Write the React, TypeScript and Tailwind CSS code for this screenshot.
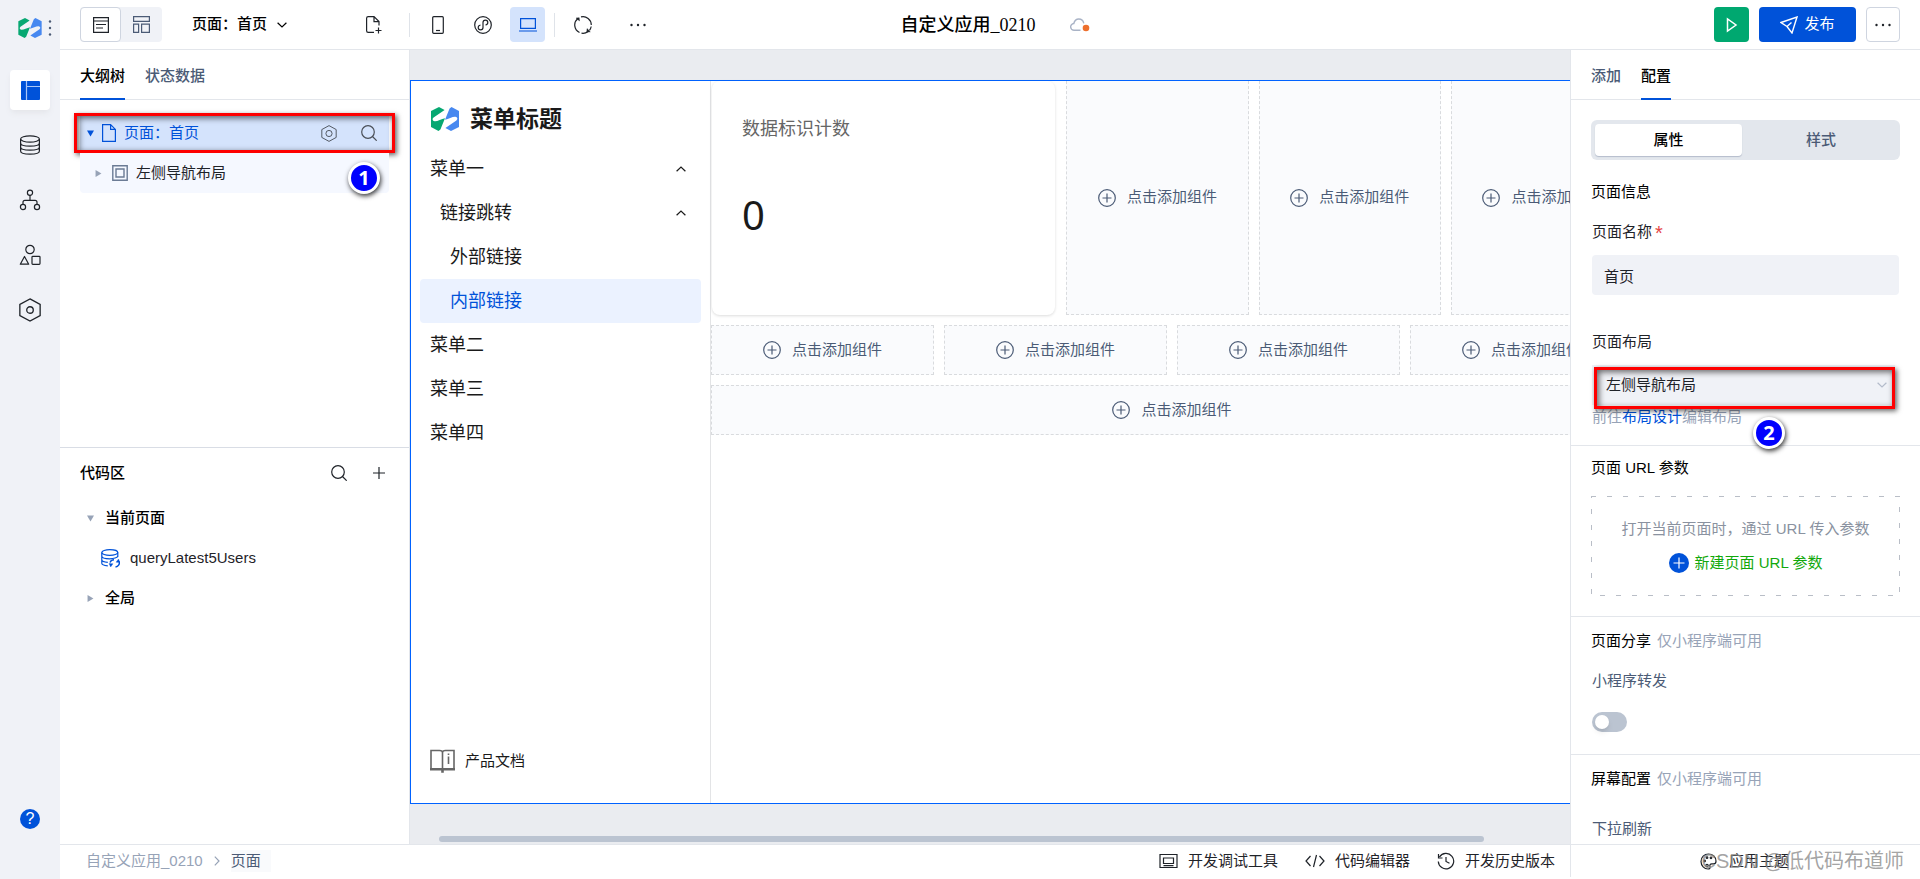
import React from 'react';
import type { ReactNode } from 'react';
import clsx from 'clsx';

type IconProps = { className?: string };

const Svg = ({ box, className, children }: { box: string; className?: string; children: ReactNode }) => (
  <svg
    viewBox={box}
    className={clsx('shrink-0', className)}
    fill="none"
    stroke="currentColor"
    strokeWidth="1.2"
    aria-hidden="true"
  >
    {children}
  </svg>
);

const logoHalf = 'M0 4 8 0l5.6 3.1L2.6 10.6C.9 11.9 1.6 14 3.6 14.2c2.6.3 6.8-2.2 10.4-3L9.4 22.6 7.5 24 0 20Z';

const Logo = ({ className }: IconProps) => (
  <svg viewBox="0 0 28 24" className={clsx('shrink-0', className)} aria-hidden="true">
    <path fill="#07a872" d={logoHalf} />
    <path fill="#4788f0" transform="rotate(180 14 12)" d={logoHalf} />
  </svg>
);

const SearchIcon = ({ className }: IconProps) => (
  <Svg box="0 0 16 16" className={className}>
    <circle cx="7" cy="7" r="6.3" />
    <path d="m11.5 11.5 4.2 4.2" />
  </Svg>
);

const HexIcon = ({ className, r = 3 }: IconProps & { r?: number }) => (
  <Svg box="0 0 20 22" className={className}>
    <path d="m10 .8 9.3 5.1v10.2L10 21.2.7 16.1V5.9Z" />
    <circle cx="10" cy="11" r={r} />
  </Svg>
);

const PlusCircle = ({ className }: IconProps) => (
  <Svg box="0 0 18 18" className={className}>
    <circle cx="9" cy="9" r="8.3" />
    <path d="M9 4.5v9M4.5 9h9" />
  </Svg>
);

const Dots = ({ className }: IconProps) => (
  <svg viewBox="0 0 16 4" className={clsx('w-4 h-1 shrink-0', className)} fill="currentColor" aria-hidden="true">
    <circle cx="1.5" cy="2" r="1.2" />
    <circle cx="8" cy="2" r="1.2" />
    <circle cx="14.5" cy="2" r="1.2" />
  </svg>
);

const Chevron = ({ className }: IconProps) => (
  <Svg box="0 0 10 6" className={className}>
    <path d="m.6.8 4.4 4.2L9.4.8" />
  </Svg>
);

const Caret = ({ open, className }: IconProps & { open?: boolean }) => (
  <svg viewBox="0 0 6 6" className={clsx('w-[7px] h-[7px] shrink-0', className)} fill="currentColor" aria-hidden="true">
    <path d={open ? 'M0 .5h6L3 5.500Z' : 'M.5 0v6l5-3Z'} />
  </svg>
);

const railItems = [
  {
    name: '数据源',
    icon: (
      <Svg box="0 0 22 22" className="w-[22px] h-[22px]">
        <ellipse cx="11" cy="5" rx="9.4" ry="3.2" />
        <path d="M1.600 5v12c0 2 4.200 3.200 9.400 3.200s9.400-1.200 9.400-3.200V5M1.600 9c0 2 4.200 3.200 9.400 3.200s9.400-1.200 9.400-3.200M1.600 13c0 2 4.200 3.200 9.400 3.200s9.400-1.200 9.400-3.200" />
      </Svg>
    ),
  },
  {
    name: '流程',
    icon: (
      <Svg box="0 0 22 22" className="w-[22px] h-[22px]">
        <circle cx="11" cy="3.7" r="2.6" />
        <circle cx="4" cy="18" r="2.6" />
        <circle cx="18" cy="18" r="2.6" />
        <path d="M11 6.300v5M4 15.400v-2.200c0-1.200.8-1.900 1.900-1.900h10.200c1.100 0 1.900.7 1.900 1.900v2.200" />
      </Svg>
    ),
  },
  {
    name: '组件',
    icon: (
      <Svg box="0 0 22 22" className="w-[22px] h-[22px]">
        <circle cx="11" cy="5.500" r="4.200" />
        <path d="m5.500 12.500 4.200 7.700H1.300Z" strokeLinejoin="round" />
        <rect x="13" y="12.300" width="8" height="8" rx=".8" />
      </Svg>
    ),
  },
  { name: '设置', icon: <HexIcon className="w-[22px] h-6" /> },
];

const Rail = () => (
  <nav className="flex flex-col items-center w-[60px] shrink-0 bg-[#f0f2f7] text-[#1f2329]">
    <div className="flex items-center w-full h-[55px] pl-[18px]">
      <Logo className="w-6 h-5" />
      <Dots className="rotate-90 text-[#4b5b76]" />
    </div>
    <div className="flex flex-col gap-[15px] pt-[15px]">
      <button type="button" aria-label="页面" className="flex items-center justify-center w-10 h-10 bg-white rounded shadow-md shadow-gray-200">
        <svg viewBox="0 0 19 19" className="w-[19px] h-[19px]" aria-hidden="true">
          <rect width="19" height="19" rx="1" fill="#0052d9" />
          <path d="M5.500 0v19M5.500 5.500H19" stroke="#a9c6f7" strokeWidth="1.2" />
        </svg>
      </button>
      {railItems.map((item) => (
        <button key={item.name} type="button" aria-label={item.name} className="flex items-center justify-center w-10 h-10">
          {item.icon}
        </button>
      ))}
    </div>
    <button
      type="button"
      aria-label="帮助"
      className="flex items-center justify-center w-5 h-5 mt-auto mb-[50px] rounded-full bg-[#0052d9] text-white text-base leading-5"
    >
      ?
    </button>
  </nav>
);

const iconBtn = 'flex items-center justify-center w-[35px] h-[35px] rounded-sm shrink-0';

const Header = () => (
  <header className="flex items-center h-[50px] shrink-0 px-5 border-b border-[#e3e6eb] text-[#1f2329]">
    <div className="flex items-center flex-1">
      <div className="flex rounded bg-[#f0f2f7]">
        <button type="button" aria-label="列表视图" className="flex items-center justify-center w-[41px] h-[35px] bg-white border border-[#cfd5e0] rounded">
          <Svg box="0 0 16 16" className="w-4 h-4">
            <path d="M.6.6h14.800v14.800H.6ZM.6 4h14.800M3 7.500h10M3 11h7" />
          </Svg>
        </button>
        <button type="button" aria-label="布局视图" className="flex items-center justify-center w-[41px] h-[35px] text-[#4b5b76]">
          <Svg box="0 0 17 17" className="w-[17px] h-[17px]">
            <path d="M.6.6h15.800v4.800H.6ZM.6 8.100h5v8.300h-5ZM8.600 8.100h7.800v8.300H8.600Z" />
          </Svg>
        </button>
      </div>
      <button type="button" className="flex items-center gap-2.5 ml-[30px] text-[15px] font-medium text-black">
        页面：首页
        <Chevron className="w-2.5 h-1.5" />
      </button>
      <button type="button" aria-label="新建页面" className={clsx(iconBtn, 'ml-[69px]')}>
        <Svg box="0 0 16 18" className="w-4 h-[18px]">
          <path d="M8 16.400H2.200c-.9 0-1.600-.7-1.600-1.600V2.200C.6 1.300 1.300.6 2.200.6H8l5 5v4M8 .6v5h5M12.500 11.500v6M9.500 14.500h6" />
        </Svg>
      </button>
      <span className="w-px h-6 ml-[18px] mr-2.5 bg-[#dfe3e9]" />
      <div className="flex gap-2.5">
        <button type="button" aria-label="手机" className={iconBtn}>
          <Svg box="0 0 12 18" className="w-3 h-[18px]">
            <rect x=".7" y=".7" width="10.600" height="16.600" rx="1" />
            <path d="M4 14.500h4" />
          </Svg>
        </button>
        <button type="button" aria-label="小程序" className={iconBtn}>
          <Svg box="0 0 18 18" className="w-[18px] h-[18px]">
            <circle cx="9" cy="9" r="8.300" />
            <path d="M6.500 9C5 9.300 4.200 10.300 4.200 11.600c0 1.400 1 2.300 2.400 2.300S9 13 9 11.600V6.400C9 5 10 4.100 11.400 4.100s2.400.9 2.400 2.300c0 1.300-.8 2.300-2.300 2.600" />
          </Svg>
        </button>
        <button type="button" aria-label="电脑" className={clsx(iconBtn, 'bg-[#d4e3fc] text-[#0052d9]')}>
          <Svg box="0 0 18 15" className="w-[18px] h-[15px]">
            <path d="M1.600 1.600h14.800v9.800H1.600ZM0 14h18" />
          </Svg>
        </button>
      </div>
      <span className="w-px h-6 ml-[9px] mr-2.5 bg-[#dfe3e9]" />
      <button type="button" aria-label="刷新" className={iconBtn}>
        <Svg box="0 0 18 18" className="w-[18px] h-[18px]">
          <path d="M4 2.400A8.300 8.300 0 0 0 5.500 16.500M7 .9A8.300 8.300 0 0 1 17.300 9M14 15.600A8.300 8.300 0 0 1 7.500 17.200M17.200 10.500a8.300 8.300 0 0 1-1.700 3.800" />
          <path d="m2 2 3.200-.3.300 3.200ZM16.300 15.800l-3.500.4.200-3.600Z" fill="currentColor" strokeWidth=".4" />
        </Svg>
      </button>
      <button type="button" aria-label="更多工具" className={clsx(iconBtn, 'ml-5')}>
        <Dots />
      </button>
    </div>

    <div className="flex items-center gap-[34px] pl-2.5">
      <h1 className="font-['Liberation_Serif','Noto_Sans_CJK_SC',serif] text-lg font-medium text-black whitespace-nowrap">
        自定义应用_0210
      </h1>
      <svg viewBox="0 0 20 14" className="w-5 h-3.5" fill="none" aria-hidden="true">
        <path d="M10.500 12.300H4.300a3.400 3.400 0 0 1-.5-6.800C4.500 2.800 6.300 1 8.800 1c2.600 0 4.500 1.900 5 4.300" stroke="#a9b3c6" strokeWidth="1.400" />
        <circle cx="16" cy="10" r="3.300" fill="#ed6f2d" />
      </svg>
    </div>

    <div className="flex items-center justify-end flex-1 gap-2.5">
      <button type="button" aria-label="预览" className={clsx(iconBtn, 'bg-[#00a870] text-white')}>
        <Svg box="0 0 12 16" className="w-3 h-4">
          <path d="M1.500 2v12l8.500-6Z" strokeWidth="1.500" />
        </Svg>
      </button>
      <button type="button" className="flex items-center justify-center gap-1.5 w-[97px] h-[35px] rounded-sm bg-[#0052d9] text-white text-[15px]">
        <Svg box="0 0 18 18" className="w-[18px] h-[18px]">
          <path d="M1 6.500 17 1l-5 16-5-6.500ZM7 10.500l4.500-4" strokeWidth="1.400" />
        </Svg>
        发布
      </button>
      <button type="button" aria-label="更多" className="flex items-center justify-center w-[34px] h-[35px] border border-[#cfd5e0] rounded">
        <Dots />
      </button>
    </div>
  </header>
);

const Tabs = ({ items, active }: { items: string[]; active: string }) => (
  <div role="tablist" className="flex gap-5 h-[50px] px-5 shrink-0 border-b border-[#e3e6eb] text-[15px]">
    {items.map((item) => (
      <button
        key={item}
        type="button"
        role="tab"
        aria-selected={item === active}
        className={clsx(
          '-mb-px pt-1 border-b-2 font-medium',
          item === active ? 'border-[#0052d9] text-black' : 'border-transparent text-[#4b5b76]',
        )}
      >
        {item}
      </button>
    ))}
  </div>
);

/* Red frame and numbered pin used for the walkthrough steps */
const Highlight = ({ className }: IconProps) => (
  <span
    className={clsx(
      'absolute pointer-events-none border-3 border-[#fe0000] shadow-[2px_2px_5px_rgba(0,0,0,0.6),inset_2px_2px_6px_rgba(0,0,0,0.6)]',
      className,
    )}
  />
);

const Pin = ({ n, className }: { n: number; className?: string }) => (
  <span
    className={clsx(
      "absolute z-10 flex items-center justify-center w-8 h-8 rounded-full border-3 border-white bg-[#0000fe] text-white text-xl leading-none font-bold font-['Noto_Sans',sans-serif] shadow-[1px_2px_5px_rgba(0,0,0,0.8)]",
      className,
    )}
  >
    {n}
  </span>
);

const LeftPanel = () => (
  <aside className="flex flex-col w-[350px] shrink-0 border-r border-[#e3e6eb] text-[15px]">
    <section className="h-[397px] shrink-0">
      <Tabs items={['大纲树', '状态数据']} active="大纲树" />
      <div className="px-5 pt-[13px]">
        <div className="relative flex items-center h-10 pl-[7px] pr-3 bg-[#d4e3fc] text-[#0052d9]">
          <Caret open />
          <Svg box="0 0 14 18" className="w-3.5 h-[18px] mx-2">
            <path d="M.6.6h8l4.800 4.800v12H.6ZM8.600.6v4.800h4.800" />
          </Svg>
          <span>页面：首页</span>
          <button type="button" aria-label="页面设置" className="ml-auto text-[#4a4f57]">
            <HexIcon className="w-4 h-[17px]" r={4} />
          </button>
          <button type="button" aria-label="搜索节点" className="ml-6 text-[#4a4f57]">
            <SearchIcon className="w-4 h-4" />
          </button>
          <Highlight className="-inset-x-1.5 inset-y-0" />
        </div>
        <div className="relative flex items-center h-10 pl-[15px] bg-[#f5f8ff] rounded-b text-[#1f2329]">
          <Caret className="text-[#97a3b7]" />
          <Svg box="0 0 16 16" className="w-4 h-4 ml-2.5 mr-2 text-[#6b7b95]">
            <path d="M.8.8h14.400v14.400H.8ZM4 4h8v8H4Z" strokeWidth="1.400" />
          </Svg>
          <span>左侧导航布局</span>
          <Pin n={1} className="right-[9px] top-[9px]" />
        </div>
      </div>
    </section>

    <section className="flex-1 border-t border-[#d9dde5]">
      <div className="flex items-center h-[50px] pl-5 pr-6 text-[#1f2329]">
        <h2 className="font-medium text-black">代码区</h2>
        <button type="button" aria-label="搜索代码" className="ml-auto">
          <SearchIcon className="w-4 h-4" />
        </button>
        <button type="button" aria-label="添加代码" className="ml-[26px]">
          <Svg box="0 0 12 12" className="w-3 h-3">
            <path d="M6 0v12M0 6h12" />
          </Svg>
        </button>
      </div>
      <div className="flex items-center gap-[11px] h-10 pl-[27px]">
        <Caret open className="text-[#97a3b7]" />
        <span className="font-medium text-black">当前页面</span>
      </div>
      <div className="flex items-center gap-2.5 h-10 pl-[41px] text-[#1f2329]">
        <Svg box="0 0 19 19" className="w-[19px] h-[19px] text-[#0052d9]">
          <ellipse cx="8.800" cy="3.500" rx="8" ry="2.800" />
          <path d="M.8 3.500v10.800c0 1.400 2.600 2.300 6 2.600M16.800 3.500v4.500M.8 7c0 1.600 3.600 2.800 8 2.800 3.600 0 8-1.200 8-2.800M.8 10.700c0 1.500 2.600 2.400 6 2.700" />
          <path d="M9 13.500A4.500 4.500 0 0 1 13 10.800M18.300 12.500a4.500 4.500 0 0 1-3.800 5.500" strokeWidth="1.400" />
          <path d="m8 14.500 4 .2-2.300 3.300ZM19 13.500l-4-.3 2.500-3.200Z" fill="currentColor" strokeWidth=".3" />
        </Svg>
        <span>queryLatest5Users</span>
      </div>
      <div className="flex items-center gap-[11px] h-10 pl-[27px]">
        <Caret className="text-[#97a3b7]" />
        <span className="font-medium text-black">全局</span>
      </div>
    </section>
  </aside>
);

const menu = [
  { label: '菜单一', pad: 'pl-2.5', open: true },
  { label: '链接跳转', pad: 'pl-5', open: true },
  { label: '外部链接', pad: 'pl-[30px]' },
  { label: '内部链接', pad: 'pl-[30px]', active: true },
  { label: '菜单二', pad: 'pl-2.5' },
  { label: '菜单三', pad: 'pl-2.5' },
  { label: '菜单四', pad: 'pl-2.5' },
];

const Slot = ({ className }: IconProps) => (
  <button
    type="button"
    className={clsx(
      'flex items-center justify-center gap-[11px] min-w-0 border border-dashed border-[#d9dbde] bg-[#fafbfd] text-[15px] text-[#4b5b76]',
      className,
    )}
  >
    <PlusCircle className="w-[18px] h-[18px]" />
    点击添加组件
  </button>
);

const Canvas = () => (
  <main className="flex flex-col flex-1 min-w-0 overflow-hidden pt-[30px] bg-[#eaecf0]">
    <div className="flex flex-1 min-w-[1224px] border border-[#0062ff] bg-white">
      <div className="flex flex-col w-[300px] shrink-0 px-[9px] border-r border-[#e3e4e6] text-[#1a1a1a]">
        <div className="flex items-center gap-[11px] h-[66px] pl-[11px] pt-2.5">
          <Logo className="w-7 h-6" />
          <span className="text-[23px] font-bold">菜单标题</span>
        </div>
        <ul className="text-lg">
          {menu.map((item) => (
            <li key={item.label}>
              <a
                href="#"
                className={clsx(
                  'flex items-center justify-between h-11 pr-[15px] rounded-sm',
                  item.pad,
                  item.active && 'bg-[#ebf2ff] text-[#0052d9]',
                )}
              >
                {item.label}
                {item.open && <Chevron className="w-2.5 h-1.5 rotate-180" />}
              </a>
            </li>
          ))}
        </ul>
        <a href="#" className="flex items-center gap-2.5 mt-auto mb-[30px] pl-2.5 text-[15px]">
          <Svg box="0 0 25 24" className="w-[25px] h-6 text-[#666]">
            <path d="M1 19V1.500h8.500c1.800 0 3 .8 3 2V20M24 19V1.500h-8.500c-1.800 0-3 .8-3 2" strokeWidth="1.600" />
            <path d="M0 20.200h25M12.500 20v3.800" strokeWidth="2.600" />
            <path d="M18.500 7.500V15M18.500 4.500V6" strokeWidth="1.600" />
          </Svg>
          产品文档
        </a>
      </div>

      <div className="flex flex-col flex-1 gap-2.5 min-w-0">
        <div className="grid grid-cols-[345fr_182fr_182fr_182fr] gap-2.5 h-[234px]">
          <div className="px-[30px] pt-8 mx-px rounded-lg shadow-[0_1px_3px_rgba(0,0,0,0.14)]">
            <div className="text-lg leading-8 text-[#666]">数据标识计数</div>
            <div className="mt-10 font-['Noto_Sans',sans-serif] text-[40px] leading-[60px] text-[#1a1a1a]">0</div>
          </div>
          <Slot className="border-t-0" />
          <Slot className="border-t-0" />
          <Slot className="border-t-0" />
        </div>
        <div className="grid grid-cols-4 gap-2.5 h-[50px]">
          <Slot />
          <Slot />
          <Slot />
          <Slot />
        </div>
        <Slot className="h-[50px]" />
      </div>
    </div>
    <div className="h-10 pt-8 pl-[29px] pr-[86px] shrink-0">
      <div className="h-1.5 rounded-full bg-[#bbc4d1]" />
    </div>
  </main>
);

const RightPanel = () => (
  <aside className="flex flex-col w-[350px] shrink-0 overflow-hidden border-l border-[#e3e6eb] text-[15px] leading-6 text-[#1f2329]">
    <Tabs items={['添加', '配置']} active="配置" />

    <section className="px-5 pt-5 pb-4 border-b border-[#e3e6eb]">
      <div className="grid grid-cols-[147px_1fr] h-10 py-1 pl-1 rounded-md bg-[#e3e7ed] font-medium">
        <button type="button" className="rounded-sm bg-white text-black shadow-[0_1px_1px_#b4bccb]">属性</button>
        <button type="button" className="text-[#4b5b76]">样式</button>
      </div>
      <h3 className="mt-5 text-black">页面信息</h3>
      <div className="px-px">
        <label htmlFor="page-name" className="block mt-4">
          页面名称<span className="ml-[3px] text-xl leading-none align-middle text-[#e54545]">*</span>
        </label>
        <input id="page-name" defaultValue="首页" className="block w-full h-10 mt-[11px] px-3 rounded-sm bg-[#f0f2f7]" />
        <label htmlFor="page-layout" className="block mt-[35px]">页面布局</label>
        <div className="relative mt-[11px] mr-1">
          <select id="page-layout" className="block w-full h-10 pl-[14px] bg-[#f0f2f7] appearance-none">
            <option>左侧导航布局</option>
          </select>
          <Chevron className="absolute right-2 top-[17px] w-2.5 h-1.5 pointer-events-none text-[#b4bccb]" />
          <Highlight className="left-0.5 right-0 top-0.5 -bottom-1" />
          <Pin n={2} className="left-[161px] top-[52px]" />
        </div>
        <p className="text-[#97a3b7]">
          前往<a href="#" className="text-[#0052d9]">布局设计</a>编辑布局
        </p>
      </div>
    </section>

    <section className="px-5 pt-2.5 pb-5 border-b border-[#e3e6eb]">
      <h3 className="text-black">页面 URL 参数</h3>
      <div className="relative flex flex-col items-center h-[100px] mt-4 pt-[21px]">
        <svg className="absolute inset-0 w-full h-full" aria-hidden="true">
          <rect width="100%" height="100%" fill="none" stroke="#b9bec7" strokeWidth="2" strokeDasharray="5 11" />
        </svg>
        <p className="text-[#8a92a0]">打开当前页面时，通过 URL 传入参数</p>
        <button type="button" className="flex items-center gap-1.5 mt-2.5 text-[#12a80c]">
          <svg viewBox="0 0 20 20" className="w-5 h-5" aria-hidden="true">
            <circle cx="10" cy="10" r="10" fill="#0052d9" />
            <path d="M10 4.500v11M4.500 10h11" stroke="#fff" strokeWidth="1.200" />
          </svg>
          新建页面 URL 参数
        </button>
      </div>
    </section>

    <section className="px-5 pt-3 pb-[22px] border-b border-[#e3e6eb]">
      <h3 className="text-black">
        页面分享<span className="ml-1.5 text-[#97a3b7]">仅小程序端可用</span>
      </h3>
      <label htmlFor="share" className="block mt-4 pl-px text-[#4b5b76]">小程序转发</label>
      <input
        id="share"
        type="checkbox"
        role="switch"
        className="block appearance-none w-[35px] h-5 mt-[19px] ml-px p-[3px] rounded-full bg-[#bbc4d1] before:block before:w-3.5 before:h-3.5 before:rounded-full before:bg-white before:shadow-md"
      />
    </section>

    <section className="px-5 pt-3">
      <h3 className="text-black">
        屏幕配置<span className="ml-1.5 text-[#97a3b7]">仅小程序端可用</span>
      </h3>
      <p className="mt-[26px] pl-px text-[#4b5b76]">下拉刷新</p>
    </section>
  </aside>
);

const Footer = () => (
  <footer className="flex h-[35px] pb-0.5 shrink-0 border-t border-[#e3e6eb] text-[15px] text-[#1f2329]">
    <div className="flex items-center flex-1 pl-[26px]">
      <a href="#" className="text-[#97a3b7]">自定义应用_0210</a>
      <Chevron className="w-2.5 h-1.5 mx-[9px] -rotate-90 text-[#97a3b7]" />
      <a href="#" className="pr-2.5 text-[#4b5b76] bg-[#f9fafc]">页面</a>
    </div>
    <div className="flex items-center gap-[27px] pr-[15px]">
      <button type="button" className="flex items-center gap-2.5">
        <Svg box="0 0 19 16" className="w-[19px] h-4">
          <path d="M1 1.500h17v13H1ZM4.500 5h10v5.500h-10ZM4.500 12.700h10" />
        </Svg>
        开发调试工具
      </button>
      <button type="button" className="flex items-center gap-2.5">
        <Svg box="0 0 20 14" className="w-5 h-3.5">
          <path d="M5.500 2 1 7l4.500 5M14.500 2 19 7l-4.500 5M11.500 1l-3 12" />
        </Svg>
        代码编辑器
      </button>
      <button type="button" className="flex items-center gap-2.5">
        <Svg box="0 0 18 18" className="w-[18px] h-[18px]">
          <path d="M2.500 5A7.700 7.700 0 1 1 1.300 9.500M1.500 2v4h4M9 5v4.500l3.500 1.800" />
        </Svg>
        开发历史版本
      </button>
    </div>
    <div className="relative flex items-center w-[350px] pl-[129px] border-l border-[#e3e6eb]">
      <button type="button" className="flex items-center gap-3">
        <Svg box="0 0 17 17" className="w-[17px] h-[17px]">
          <path d="M8.500 1C4.200 1 1 4.300 1 8.500S4.300 16 8 16c1.800 0 2.400-1 2-2.400-.5-1.700.2-2.700 1.800-2.700h1.700c1.600 0 2.500-1 2.500-2.600C16 4 12.700 1 8.500 1Z" />
          <circle cx="4.600" cy="8" r=".8" />
          <circle cx="7" cy="4.700" r=".8" />
          <circle cx="11" cy="4.800" r=".8" />
          <circle cx="7" cy="12.500" r="1.200" />
        </Svg>
        应用主题
      </button>
      <span className="absolute right-4 text-xl text-[#8c8c8c]/80 whitespace-nowrap pointer-events-none">CSDN @低代码布道师</span>
    </div>
  </footer>
);

const App = () => (
  <div className="flex h-screen min-h-[640px] overflow-hidden bg-white font-['Liberation_Sans','Noto_Sans_CJK_SC',sans-serif]">
    <Rail />
    <div className="flex flex-col flex-1 min-w-0">
      <Header />
      <div className="flex flex-1 min-h-0">
        <LeftPanel />
        <Canvas />
        <RightPanel />
      </div>
      <Footer />
    </div>
  </div>
);

export default App;
